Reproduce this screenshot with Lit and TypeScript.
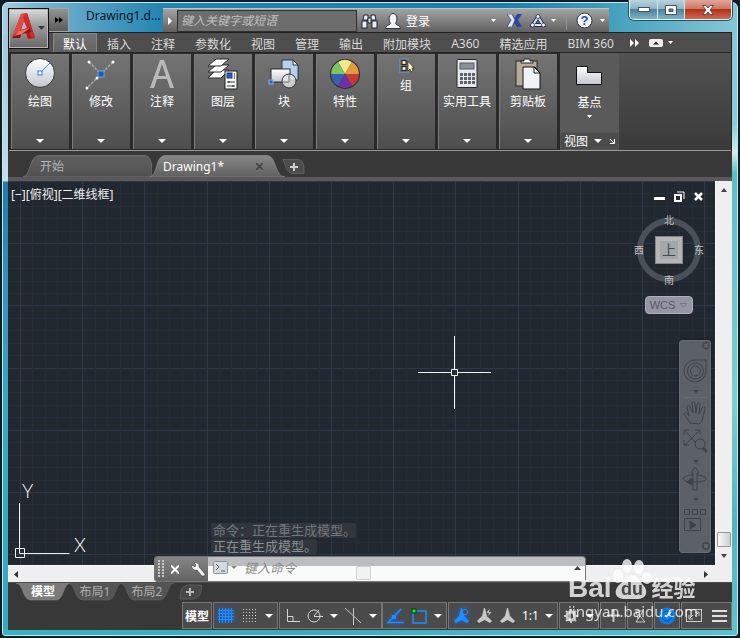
import { LitElement, html, svg, css, type TemplateResult } from "lit";
import { customElement, state } from "lit/decorators.js";
import { classMap } from "lit/directives/class-map.js";

const caret = html`<svg class="caret" width="8" height="4" viewBox="0 0 8 4" aria-hidden="true"><path d="M0 0h8L4 4z" fill="#fff" /></svg>`;
const smallCaret = html`<svg class="caret" width="5" height="3" viewBox="0 0 5 3" aria-hidden="true"><path d="M0 0h5L2.5 3z" fill="#fff" /></svg>`;

const icon = (w: number, h: number, body: TemplateResult) =>
  html`<svg width=${w} height=${h} viewBox="0 0 ${w} ${h}" aria-hidden="true">${body}</svg>`;

const wheel = ["#f2e98c", "#e39b3e", "#c23b36", "#6b32a3", "#3a5fb0", "#7cc562"];
const wheelSlice = (i: number) => {
  const a = ((i * 60 - 120) * Math.PI) / 180;
  const b = a + Math.PI / 3;
  const p = (t: number) => `${(16 + 14 * Math.cos(t)).toFixed(2)} ${(16 + 14 * Math.sin(t)).toFixed(2)}`;
  return svg`<path d="M16 16L${p(a)}A14 14 0 0 1 ${p(b)}z" fill=${wheel[i]} />`;
};

const shade = svg`<linearGradient id="shade" x1="0" y1="0" x2="0" y2="1"><stop offset="0" stop-color="#fff"/><stop offset="1" stop-color="#c3c6cf"/></linearGradient>`;

const ribbonIcons = {
  draw: icon(32, 32, svg`<defs>${shade}</defs><circle cx="16" cy="15" r="14.5" fill="url(#shade)" stroke="#33363b"/>
    <path d="M16 15L26 5" stroke="#3a83e8"/><rect x="14" y="13" width="4" height="4" fill="#fff" stroke="#2a78e4"/>`),
  modify: icon(32, 32, svg`<path d="M4 4L16 16M28 4L2 30" stroke="#a9a9a9" stroke-width="1.5" stroke-dasharray="3 1"/>
    <g fill="#fff"><circle cx="4" cy="4" r="1.5"/><circle cx="28" cy="4" r="1.5"/><circle cx="2" cy="30" r="1.5"/><circle cx="12" cy="20" r="1.5"/></g>
    <rect x="13" y="13" width="6" height="6" fill="#2458a8" stroke="#6fa4f0"/>`),
  note: icon(32, 32, svg`<path d="M14 2h4l10 28h-4l-3-9H11L8 30H4zM16 6l-4 12h8z" fill="#b9b9b9"/>`),
  layer: icon(32, 32, svg`<g fill="#fff" stroke="#2c2c2c"><path d="M1 20l8-8h13l-8 8z"/><path d="M1 14l8-7h13l-8 7z"/><path d="M1 8l8-7h13l-8 7z"/></g>
    <rect x="18" y="13" width="12" height="18" fill="#f2f3f5" stroke="#222"/><rect x="20" y="15" width="5" height="5" fill="#2e5db4" stroke="#193e84"/>
    <path d="M27.5 15v6" stroke="#888"/><path d="M20 24h8M20 28h8" stroke="#444"/><path d="M22 23v2M26 27v2" stroke="#222"/>`),
  block: icon(32, 32, svg`<defs>${shade}</defs><path d="M14 2h11l5 5v15H14z" fill="#b8d0ee" stroke="#24354f"/><path d="M25 2v5h5z" fill="#fff" stroke="#24354f"/>
    <rect x="3" y="11" width="19" height="13" fill="url(#shade)" stroke="#2a2a2a"/><circle cx="21" cy="23" r="7" fill="#e6e7eacc" stroke="#333"/>
    <path d="M21 16v8h-7" fill="none" stroke="#777"/><rect x="1" y="22" width="4" height="4" fill="#2d65b8" stroke="#7fb1f5"/>`),
  props: icon(32, 32, svg`<circle cx="16" cy="16" r="15" fill="#2b2b2b"/>${wheel.map((_, i) => wheelSlice(i))}`),
  group: icon(16, 16, svg`<rect x="1.5" y=".5" width="9" height="14" fill="none" stroke="#5a9dff" stroke-dasharray="1 1"/>
    <rect x="4" y="2.5" width="4" height="4" fill="#f0e7a0" stroke="#222"/><rect x="4" y="8.5" width="4" height="4" fill="#ddd" stroke="#222"/>
    <path d="M10 3v10l2-2 1 3 2-1-1-3h2z" fill="#fff4b8" stroke="#222" stroke-width=".7"/>`),
  calc: icon(32, 32, svg`<rect x="6" y="1.5" width="20" height="28" rx="1" fill="#e8e9ec" stroke="#26272b"/><rect x="9" y="5" width="14" height="6" fill="#8b9099" stroke="#555a63"/>
    ${[0, 1, 2, 3].map((c) => [0, 1, 2].map((r) => svg`<rect x=${9 + c * 4} y=${15 + r * 4} width="3" height="3" fill="#5d6068"/>`))}`),
  clip: icon(32, 32, svg`<rect x="4" y="3" width="21" height="25" fill="#b8ab9c" stroke="#2c2925"/><path d="M9 5V3h3V1h6v2h3v2z" fill="#fff" stroke="#222"/>
    <path d="M11 9h12l5 6v16H11z" fill="#f1f2f5" stroke="#151515"/><path d="M22 9v6h6z" fill="#fff" stroke="#151515"/>`),
  base: icon(32, 24, svg`<defs>${shade}</defs><path d="M2.5 3.5h11v6h14v12h-25z" fill="url(#shade)" stroke="#111"/>`),
};

interface Panel { label: string; art: TemplateResult; }
const panels: Panel[] = [
  { label: "绘图", art: ribbonIcons.draw },
  { label: "修改", art: ribbonIcons.modify },
  { label: "注释", art: ribbonIcons.note },
  { label: "图层", art: ribbonIcons.layer },
  { label: "块", art: ribbonIcons.block },
  { label: "特性", art: ribbonIcons.props },
  { label: "组", art: ribbonIcons.group },
  { label: "实用工具", art: ribbonIcons.calc },
  { label: "剪贴板", art: ribbonIcons.clip },
];

const ribbonTabs = ["默认", "插入", "注释", "参数化", "视图", "管理", "输出", "附加模块", "A360", "精选应用", "BIM 360"];

const base = css`
  *, *::before, *::after { box-sizing: border-box; }
  svg { display: block; flex: none; }
  button {
    margin: 0; padding: 0; border: 0; background: none; color: inherit;
    font: inherit; display: flex; align-items: center; justify-content: center; white-space: nowrap;
  }
  input { min-width: 0; margin: 0; padding: 0; border: 0; background: none; font: inherit; outline: none; }
`;

@customElement("title-bar")
export class TitleBar extends LitElement {
  static styles = [base, css`
    :host { display: flex; height: 32px; position: relative; }
    .app {
      position: absolute; left: 0; top: 8px; width: 41px; height: 41px; z-index: 2;
      padding-bottom: 6px; border: 1px solid #111; gap: 2px;
      background: linear-gradient(#dcdcdc, #a0a0a0 40%, #686868);
      box-shadow: inset 0 0 0 1px #b5b5b5;
    }
    .app svg + svg { align-self: flex-end; margin-bottom: 12px; }
    .quick { margin: 8px 0 0 41px; width: 20px; background: linear-gradient(#929292, #5b5b5b); border: 1px solid #a5a5a5; border-left: 0; }
    .name { width: 94px; padding: 7px 0 0 17px; font-size: 12px; line-height: 18px; color: #0b1420; white-space: nowrap; }
    .info {
      flex: 1; margin-top: 8px; min-width: 0; display: flex; align-items: center;
      background: linear-gradient(#a3a3a3, #606060); border-top: 1px solid #b6c4cc; color: #fff;
    }
    .next { width: 14px; height: 24px; }
    .search {
      width: 180px; height: 22px; padding: 0 3px; border: 1px solid #2f2f2f;
      background: #6d6d6d; font-size: 12px; font-style: italic; color: #fff;
    }
    .search::placeholder { color: #c2c2c2; opacity: 1; }
    .bino { margin-left: 4px; }
    .sign { margin-left: 7px; gap: 5px; font-size: 12px; }
    .grow { flex: 1; }
    .x { margin-left: 11px; }
    .tri { margin-left: 8px; gap: 5px; }
    .bar { width: 1px; height: 18px; margin: 0 9px 0 10px; background: #929292; }
    .help { gap: 7px; padding-right: 4px; }
    .win { display: flex; height: 20px; margin: 0 0 0 20px; border: 1px solid #dceff5; border-top: 0; border-radius: 0 0 5px 5px; overflow: hidden; box-shadow: 0 0 0 1px #31505f; }
    .win button { width: 27px; background: linear-gradient(#b9d3de, #8fb4c4 45%, #4b8299 50%, #7db5c6); }
    .win button + button { border-left: 1px solid #d2e6ee; }
    .win .close { width: 47px; background: linear-gradient(#e0a798, #cf7765 45%, #b23118 50%, #ce6a50); }
  `];

  render() {
    return html`
      <button class="app" aria-label="应用程序菜单">
        ${icon(24, 28, svg`<path d="M0 26L9 2l6-1 8 25-7 1-2-6-5 1-1 4z" fill="#b3171d"/><path d="M9 2l6-1-2 6-8 19-5 0z" fill="#e04a45"/>
          <path d="M12 9l3 7-6 2z" fill="#b9b9b9"/><path d="M15 1l8 25-4-1-8-20z" fill="#cf2a2c"/><path d="M4 21l14-5 1 4-10 2-1 4-8 0z" fill="#8d1014"/><path d="M2 24l5-5 11-3-8 6z" fill="#ef6c62"/>`)}
        ${icon(7, 4, svg`<path d="M0 0h7L3.5 4z" fill="#2e3947"/>`)}
      </button>
      <button class="quick" aria-label="更多">${icon(8, 6, svg`<path d="M0 0l4 3-4 3zM4 0l4 3-4 3z" fill="#000"/>`)}</button>
      <div class="name">Drawing1.d...</div>
      <div class="info">
        <button class="next" aria-label="展开">${icon(4, 8, svg`<path d="M0 0l4 4-4 4z" fill="#fff"/>`)}</button>
        <input class="search" aria-label="搜索" placeholder="键入关键字或短语" />
        <button class="bino" aria-label="查找">${icon(17, 16, svg`<g fill="#e9edf2" stroke="#1f2937"><path d="M3 2h4v5H2zM10 2h4l1 5h-5z"/><rect x="1" y="8" width="5" height="7"/><rect x="11" y="8" width="5" height="7"/><path d="M7 5h3v5H7z"/></g>`)}</button>
        <button class="sign">${icon(16, 16, svg`<path d="M.5 15.5c1-4 4-3 5-5C3 7 4 .5 8 .5S13 7 10.5 10.5c1 2 4 1 5 5z" fill="#f1f3f6" stroke="#2a3340"/>`)}<span>登录</span></button>
        <span class="grow"></span>
        ${smallCaret}
        <button class="x" aria-label="Exchange">${icon(15, 13, svg`<path d="M0 0h5l3 4 2-4h5l-4 6 4 7h-5l-3-4-2 4H0l4-7z" fill="#2748a0"/><path d="M0 0h5l3 6-3 7H0l4-7z" fill="#dfe6f4" stroke="#27345c" stroke-width=".6"/>`)}</button>
        <button class="tri" aria-label="A360">${icon(16, 14, svg`<path d="M8 3L3 11h10z" fill="none" stroke="#26324e" stroke-width="4"/><path d="M8 3L3 11h10z" fill="none" stroke="#dce3f2" stroke-width="2"/><g fill="#eef2fa" stroke="#26324e" stroke-width=".8"><circle cx="8" cy="2.5" r="2"/><circle cx="2.5" cy="11" r="2"/><circle cx="13.5" cy="11" r="2"/></g>`)}${smallCaret}</button>
        <span class="bar"></span>
        <button class="help" aria-label="帮助">
          <svg width="17" height="17" viewBox="0 0 17 17"><circle cx="8.5" cy="8.5" r="7.5" fill="#f4f6f9" stroke="#2b3442"/><text x="8.5" y="13" text-anchor="middle" font-family="Liberation Sans, sans-serif" font-weight="700" font-size="13" fill="#1c4fa5">?</text></svg>
          ${smallCaret}
        </button>
      </div>
      <div class="win">
        <button aria-label="最小化">${icon(12, 6, svg`<rect x=".5" y=".5" width="11" height="4" fill="#fff" stroke="#43515c"/>`)}</button>
        <button aria-label="最大化">${icon(12, 10, svg`<path d="M.5.5h11v9H.5zM4 4v2.5h4V4z" fill="#fff" fill-rule="evenodd" stroke="#43515c"/>`)}</button>
        <button class="close" aria-label="关闭">${icon(12, 10, svg`<path d="M.5.5h3.5L6 3 8 .5h3.5L8 5l3.5 4.5H8L6 7 4 9.5H.5L4 5z" fill="#fff" stroke="#5a4a4a"/>`)}</button>
      </div>`;
  }
}

@customElement("ribbon-bar")
export class RibbonBar extends LitElement {
  @state() private active = 0;
  static styles = [base, css`
    :host { display: block; background: #4b4b4b; border: 1px solid #222; border-bottom: 0; color: #d8d8d8; font-size: 12px; }
    .tabs { display: flex; height: 19px; padding-left: 44px; align-items: stretch; background: #4e4e4e; }
    .tab { padding: 1px 9px 0; border: 1px solid transparent; border-bottom: 0; }
    .on { color: #fff; background: linear-gradient(#747474, #626262); border-color: #858585; }
    .more { margin: 0 0 0 6px; }
    .mini { margin: 0 0 0 10px; gap: 5px; }
    .panels {
      display: flex; height: 99px; border-top: 1px solid #262626; border-bottom: 1px solid #999;
      background: linear-gradient(#525252, #3a3a3a);
    }
    .panel {
      width: 61px; height: 97px; display: flex; flex-direction: column; justify-content: space-between;
      background: linear-gradient(#747474, #4e4e4e); border: 1px solid #2a2a2a; border-width: 1px 1px 1px 2px; box-shadow: inset 1px 1px #7c7c7c; color: #fff;
    }
    .tool { flex-direction: column; padding-top: 4px; gap: 3px; line-height: 18px; }
    .drop { height: 16px; }
    .view { background: #5a5a5a; border-width: 0 0 0 2px; box-shadow: none; }
    .view .tool { padding-top: 10px; gap: 7px; }
    .view .tool .caret { margin-top: -4px; }
    .foot { display: flex; align-items: center; height: 18px; gap: 6px; padding: 0 3px; background: #4b4b4b; border: 1px solid #555; white-space: nowrap; }
    .foot .go { margin-left: auto; }
  `];

  render() {
    return html`
      <nav class="tabs">
        ${ribbonTabs.map((t, i) => html`<button class=${classMap({ tab: true, on: i === this.active })} @click=${() => (this.active = i)}>${t}</button>`)}
        <button class="more" aria-label="更多选项卡">${icon(9, 8, svg`<path d="M0 0l4 4-4 4zM5 0l4 4-4 4z" fill="#fff"/>`)}</button>
        <button class="mini" aria-label="最小化功能区">${icon(14, 8, svg`<rect width="14" height="8" rx="2" fill="#f0f0f0"/><path d="M4 5.5l3-3 3 3z" fill="#222"/>`)}${smallCaret}</button>
      </nav>
      <div class="panels">
        ${panels.map((p) => html`
          <section class="panel">
            <button class="tool">${p.art}<span>${p.label}</span></button>
            <button class="drop" aria-label=${p.label + "面板"}>${caret}</button>
          </section>`)}
        <section class="panel view">
          <button class="tool">${ribbonIcons.base}<span>基点</span>${smallCaret}</button>
          <div class="foot"><span>视图</span>${caret}<button class="go" aria-label="面板设置">${icon(5, 5, svg`<path d="M0 0l4 4M4.5 0v4.5H0" stroke="#fff" fill="none"/>`)}</button></div>
        </section>
      </div>`;
  }
}

@customElement("file-tabs")
export class FileTabs extends LitElement {
  static styles = [base, css`
    :host { display: flex; height: 30px; padding: 4px 0 0 15px; background: #383838; border-bottom: 4px solid #5a5a5a; font-size: 12px; }
    .tab { display: grid; align-items: center; height: 22px; }
    .tab > * { grid-area: 1 / 1; }
    .start { width: 129px; color: #b4b4b4; }
    .draw { width: 137px; margin-left: -2px; color: #fff; z-index: 1; }
    .draw .label { padding-left: 13px; }
    .label { justify-content: flex-start; padding-left: 17px; height: 22px; }
    .close { justify-self: end; margin-right: 24px; }
    .add { margin-left: -5px; height: 22px; }
  `];
  render() {
    return html`
      <div class="tab start">
        ${icon(129, 22, svg`<defs><linearGradient id="t1" x2="0" y2="1"><stop stop-color="#5f5f5f"/><stop offset="1" stop-color="#515151"/></linearGradient></defs><path d="M0 22C8 21 6 1 16 .5H121c7 0 8 7 8 21.5z" fill="url(#t1)" stroke="#6d6d6d"/>`)}
        <button class="label">开始</button>
      </div>
      <div class="tab draw">
        ${icon(137, 22, svg`<defs><linearGradient id="t2" x2="0" y2="1"><stop stop-color="#898989"/><stop offset="1" stop-color="#606060"/></linearGradient></defs><path d="M0 22C8 20 5 1 15 .5H117c10 0 7 21 18 21.5z" fill="url(#t2)" stroke="#8a8a8a" stroke-width=".7"/>`)}
        <button class="label">Drawing1*</button>
        <button class="close" aria-label="关闭图形">${icon(7, 7, svg`<path d="M0 0l7 7M7 0L0 7" stroke="#454545" stroke-width="1.8"/>`)}</button>
      </div>
      <button class="add" aria-label="新图形">${icon(23, 22, svg`<path d="M1 4.5h14c7 0 7 6 7 14H11C4 18 4 11 1 4.5z" fill="#4c4c4c" stroke="#606060"/><path d="M12 8v8M8 12h8" stroke="#ccc" stroke-width="2"/>`)}</button>`;
  }
}

@customElement("view-cube")
export class ViewCube extends LitElement {
  static styles = [base, css`
    :host { display: flex; flex-direction: column; align-items: center; gap: 9px; color: #c2c3c5; }
    .rose { display: grid; grid-template: 14px 46px 14px / 14px 46px 14px; place-items: center; font-size: 10px; line-height: 14px; position: relative; }
    .ring { position: absolute; inset: 5px; border: 6px solid #4b5058; border-radius: 50%; }
    .rose button { position: relative; line-height: 14px; }
    .n, .s { grid-column: 2; }
    .s { grid-row: 3; }
    .w { grid-area: 2 / 1; }
    .e { grid-area: 2 / 3; }
    .top { grid-area: 2 / 2; width: 28px; height: 28px; font-size: 14px; color: #3f474f; background: #a2a7aa; border: 1px solid #83878b; box-shadow: inset 0 0 0 4px #b5b5b5; }
    .wcs { width: 48px; height: 18px; gap: 4px; font: 11px "Liberation Sans", sans-serif; color: #565866; background: #9496a4; border: 1px solid #adafbb; border-radius: 4px; }
  `];
  render() {
    return html`
      <div class="rose"><span class="ring"></span>
        <button class="n">北</button><button class="w">西</button><button class="top">上</button><button class="e">东</button><button class="s">南</button>
      </div>
      <button class="wcs">WCS ${icon(9, 5, svg`<path d="M1 .5h7L4.5 4z" fill="none" stroke="#777987"/>`)}</button>`;
  }
}

@customElement("nav-bar")
export class NavBar extends LitElement {
  static styles = [base, css`
    :host { display: flex; flex-direction: column; align-items: center; width: 32px; height: 213px; background: #5c6167; border: 1px solid #6a6e73; border-radius: 3px; box-shadow: 0 0 2px #111; }
  `];
  render() {
    return html`${icon(30, 211, svg`
      <g fill="none" stroke="#3c4249">
        <circle cx="26" cy="4.5" r="3.5" fill="#4a4f55"/><path d="M24 2.5l4 4M28 2.5l-4 4" stroke="#747980"/>
        <path d="M16 19h10v11a11 11 0 1 1-10-11z"/><circle cx="15.5" cy="30" r="8"/><circle cx="15.5" cy="30" r="5"/>
        <path d="M10 82c-2-4-5-7-6-9 0-2 3-2 5 2l-2-9c0-3 3-2 3 0l3 6-1-9c0-3 3-3 3 0l1 9 1-8c0-3 3-2 3 0l-1 9 3-6c1-2 4-1 3 1l-3 12-3 3z"/>
        <path d="M5 90l13 14M19 90L5 104M4 94v-5h5M15 89h5v4M4 99v5h5"/><circle cx="20" cy="103" r="5" fill="#5c6167"/><path d="M23 107l4 4" stroke-width="2.5"/>
        <path d="M13 149v-17h-2l4-6 4 6h-2v17z"/><path d="M13 134c-14 1-11 6-3 7M17 134c13 1 11 7 0 7h-6"/><path d="M12 137l-5 4 5 3z" fill="#3c4249"/>
        <path d="M4.5 168.5h5v5h-5zM12.5 168.5h5v5h-5zM20.5 168.5h5v5h-5zM4.5 177.5h16v12h-16z"/><path d="M10 180l6 4-6 4z" fill="#3c4249"/>
        <circle cx="26" cy="205" r="3.5" fill="#4a4f55"/><path d="M24 204h4M24 206h4" stroke="#747980"/>
      </g>
      <g fill="#3c4249"><path d="M13 49h6l-3 3zM13 119h6l-3 3zM13 157h6l-3 3z"/></g>
      <path d="M3 56.5h24" stroke="#666b70"/>`)}`;
  }
}

// The drawing grid: a minor line every GRID units, every fifth one is major.
const GRID = 12.44;
const gridLines = (count: number, offset: number, vertical: boolean) =>
  [false, true].map((major) =>
    Array.from({ length: count }, (_, i) => i)
      .filter((i) => (i % 5 === 0) === major)
      .map((i) => {
        const p = Math.round(offset + i * GRID) + 0.5;
        const color = major ? "#2f384b" : "#252d36";
        return vertical ? svg`<path d="M${p} 0V2000" stroke=${color}/>` : svg`<path d="M0 ${p}H3000" stroke=${color}/>`;
      }));

@customElement("model-view")
export class ModelView extends LitElement {
  static styles = [base, css`
    :host { display: grid; grid-template: minmax(0, 1fr) 17px / minmax(0, 1fr) 17px; position: relative; min-height: 384px; }
    .canvas { position: relative; overflow: hidden; background: #212830; }
    .grid { position: absolute; left: 0; top: 0; }
    .views { position: absolute; left: 3px; top: 5px; font-size: 12px; line-height: 18px; color: #eee; display: flex; }
    .wincon { position: absolute; right: 12px; top: 10px; display: flex; align-items: center; gap: 9px; }
    .cross { position: absolute; left: 410px; top: 155px; }
    .ucs { position: absolute; left: 6px; bottom: 6px; }
    view-cube { position: absolute; right: 9px; top: 32px; }
    nav-bar { position: absolute; right: 4px; top: 159px; }
    .v, .h { display: flex; align-items: center; justify-content: space-between; background: #efefef; }
    .v { flex-direction: column; padding: 7px 0 7px; border-left: 1px solid #fafafa; }
    .h { padding: 0 7px 0 6px; border-top: 1px solid #fafafa; }
    .thumb { width: 14px; height: 15px; margin: auto 0 7px; border: 1px solid #999; border-radius: 1px; background: linear-gradient(90deg, #fafafa, #cfcfcf); }
    .corner { background: #efefef; }
    .cmd { position: absolute; left: 146px; bottom: 0; width: 432px; max-width: calc(100% - 146px); height: 26px; display: flex; border: 1px solid #777; border-radius: 3px; overflow: hidden; }
    .tools { width: 53px; display: flex; align-items: center; gap: 7px; padding-left: 3px; background: linear-gradient(#858585, #626262); }
    .entry { flex: 1; min-width: 0; display: flex; align-items: center; gap: 4px; padding: 0 4px 2px 5px; background: linear-gradient(#bcbdc0 9px, #fafafa 9px); }
    .line { flex: 1; padding-left: 3px; font-size: 13px; line-height: 16px; font-style: italic; color: #777; }
    .line::placeholder { color: #8a8a8a; opacity: 1; }
    .up { align-self: flex-start; margin-top: 9px; }
    .knob { position: absolute; left: 348px; bottom: 2px; width: 15px; height: 14px; border: 1px solid #d0d0d0; border-radius: 2px; background: #f2f2f2; }
    .log { position: absolute; left: 203px; bottom: 28px; display: flex; flex-direction: column; align-items: flex-start; gap: 1px; font-size: 13px; line-height: 15px; color: #73777b; }
    .log span { padding-left: 2px; background: #30363c; border-radius: 2px; }
    .log span + span { color: #8b8e91; }
  `];
  render() {
    return html`
      <div class="canvas">
        <svg class="grid" width="3000" height="2000" aria-hidden="true">
          ${gridLines(160, 0, false)}
          ${gridLines(240, 12, true)}
        </svg>
        <div class="views"><button>[−]</button><button>[俯视]</button><button>[二维线框]</button></div>
        <div class="wincon">
          <button aria-label="最小化">${icon(11, 11, svg`<path d="M0 6h11v3H0z" fill="#fff"/>`)}</button>
          <button aria-label="还原">${icon(11, 11, svg`<path d="M3 1h7v7" fill="none" stroke="#fff"/><rect x="1" y="4" width="6" height="6" fill="none" stroke="#fff" stroke-width="2"/>`)}</button>
          <button aria-label="关闭">${icon(9, 9, svg`<path d="M1 1l7 7M8 1L1 8" stroke="#fff" stroke-width="2.5"/>`)}</button>
        </div>
        <svg class="cross" width="73" height="73" viewBox="0 0 73 73" aria-hidden="true"><path d="M0 36.5h33M40 36.5h33M36.5 0v33M36.5 40v33M33.5 33.5h6v6h-6z" fill="none" stroke="#f2f2f2"/></svg>
        <svg class="ucs" width="80" height="88" viewBox="0 0 80 88" aria-hidden="true">
          <path d="M5.5 32v50.5h50M1.5 77.5h9v9h-9z" fill="none" stroke="#eee"/>
          <g font-family="Lato, sans-serif" font-weight="300" font-size="19" fill="#fff"><text x="8" y="27">Y</text><text x="60" y="81">X</text></g>
        </svg>
        <view-cube></view-cube>
        <nav-bar></nav-bar>
      </div>
      <div class="v">${icon(6, 4, svg`<path d="M0 4l3-4 3 4z" fill="#444"/>`)}<span class="thumb"></span>${icon(6, 4, svg`<path d="M0 0l3 4 3-4z" fill="#444"/>`)}</div>
      <div class="h">${icon(4, 7, svg`<path d="M4 0L0 3.5 4 7z" fill="#333"/>`)}${icon(4, 7, svg`<path d="M0 0l4 3.5L0 7z" fill="#333"/>`)}</div>
      <div class="corner"></div>
      <div class="log"><span>命令：正在重生成模型。</span><span>正在重生成模型。</span></div>
      <div class="cmd">
        <div class="tools">
          ${icon(6, 18, svg`<g fill="#c8c8c8">${[0, 3, 6, 9, 12, 15].map((y) => [0, 4].map((x) => svg`<rect x=${x} y=${y} width="2" height="2"/>`))}</g>`)}
          <button aria-label="关闭">${icon(8, 9, svg`<path d="M0 .5l8 8M8 .5l-8 8" stroke="#fff" stroke-width="2"/>`)}</button>
          <button aria-label="自定义">${icon(20, 15, svg`<path d="M6 3l3 2 1-2-2-2c3-1 6 1 5 4l6 7c0 2-1 2-3 2L11 8C8 9 5 6 6 3z" fill="#f4f4f4" stroke="#333" stroke-width=".5"/>`)}</button>
        </div>
        <div class="entry">
          <button aria-label="最近使用的命令">${icon(24, 14, svg`<rect x=".5" y=".5" width="14" height="12" rx="1" fill="#d5d8dc" stroke="#8d949d"/><path d="M3 3l3 3-3 3M8 10h4" fill="none" stroke="#59616b"/><path d="M18 5h6l-3 3z" fill="#888"/>`)}</button>
          <input class="line" aria-label="命令" placeholder="键入命令" />
          <button class="up" aria-label="命令历史">${icon(7, 4, svg`<path d="M0 4l3.5-4L7 4z" fill="#444"/>`)}</button>
        </div>
      </div>
      <span class="knob"></span>`;
  }
}

@customElement("layout-tabs")
export class LayoutTabs extends LitElement {
  @state() private active = 0;
  static styles = [base, css`
    :host { display: flex; height: 20px; padding-left: 8px; background: #383838; border-top: 1px solid #4c4c4c; font-size: 12px; color: #b0b0b0; }
    .tab { display: grid; width: 54px; height: 18px; margin-right: -2px; }
    .tab > * { grid-area: 1 / 1; place-self: center; }
    .tab path { fill: #545454; stroke: #666; }
    .on path { fill: #7b7b7b; stroke: #8a8a8a; }
    .on { color: #fff; font-weight: 700; }
    .tab svg { z-index: 0; }
    .tab span { z-index: 1; line-height: 16px; }
  `];
  render() {
    const names = ["模型", "布局1", "布局2"];
    return html`
      ${names.map((n, i) => html`
        <button class=${classMap({ tab: true, on: i === this.active })} @click=${() => (this.active = i)}>
          ${icon(54, 18, svg`<path d="M0 0h54c-7 1-6 17-14 17H15C6 17 8 1 0 0z" stroke-width=".6"/>`)}<span>${n}</span>
        </button>`)}
      <button aria-label="新建布局">${icon(30, 18, svg`<path d="M29.5 1c0 7-1 14-9 14H8C8 5 11 1 17 1z" fill="#484848" stroke="#5b5b5b"/><path d="M18 4v8M14 8h8" stroke="#bbb" stroke-width="2"/>`)}</button>`;
  }
}

const person = (color: string, extra: TemplateResult) =>
  icon(17, 17, svg`<path d="M8 1h1l2 8 5 5-2 2-5.5-3L3 16l-2-2 5-5z" fill=${color}/>${extra}`);

@customElement("status-bar")
export class StatusBar extends LitElement {
  static styles = [base, css`
    :host { display: flex; justify-content: flex-end; height: 28px; padding-bottom: 1px; background: #383838; font-size: 12px; color: #fff; }
    .group { display: flex; align-items: center; justify-content: space-between; height: 27px; margin-left: 1px; padding: 0 4px; background: #4b4b4b; border: 1px solid #777; }
    .model { width: 30px; padding: 0; justify-content: center; font-weight: 700; }
    .snap { width: 65px; }
    .polar { width: 103px; }
    .osnap { width: 65px; margin-left: 0; }
    .scale { width: 110px; }
    .gear { width: 40px; }
    .one { width: 26px; justify-content: center; }
    .last { width: 51px; }
    .blue { filter: drop-shadow(0 0 2px #0a6cff); }
  `];
  render() {
    const lines = [2, 5, 8, 11, 14];
    const dots = [0, 3, 6, 9, 12];
    return html`
      <button class="group model">模型</button>
      <div class="group snap">
        <button class="blue" aria-label="栅格">${icon(16, 15, svg`<g stroke="#1e90ff">${lines.map((x) => svg`<path d="M${x - 0.5} 0v15"/>`)}${lines.slice(0, 4).map((y) => svg`<path d="M0 ${y + 0.5}h16"/>`)}</g>`)}</button>
        <button aria-label="捕捉">${icon(14, 14, svg`<g fill="#ccc">${dots.map((x) => dots.map((y) => svg`<rect x=${x} y=${y} width="1" height="1"/>`))}</g>`)}</button>
        ${caret}
      </div>
      <div class="group polar">
        <button aria-label="正交">${icon(16, 14, svg`<path d="M3.5 0v12.5H16M3 7.5h6V13" fill="none" stroke="#d5d5d5"/>`)}</button>
        <button aria-label="极轴追踪">${icon(16, 14, svg`<circle cx="7" cy="7" r="6" fill="none" stroke="#d5d5d5"/><path d="M7 7.5h9M7 7l5-6" stroke="#d5d5d5"/>`)}</button>
        ${caret}
        <button aria-label="等轴测草图">${icon(18, 18, svg`<path d="M1 1l16 15M9.5 1v17" stroke="#c5c5c5"/>`)}</button>
        ${caret}
      </div>
      <div class="group osnap">
        <button class="blue" aria-label="对象捕捉追踪">${icon(17, 16, svg`<path d="M14 1L1 14.5h16" fill="none" stroke="#1e90ff" stroke-width="1.5"/><rect x="5" y="7" width="4" height="4" fill="#1e90ff"/>`)}</button>
        <button aria-label="对象捕捉">${icon(16, 16, svg`<rect x="2" y="3" width="13" height="12" fill="none" stroke="#1e90ff" stroke-width="1.5"/><rect x="1" y="1" width="4" height="4" fill="#0f2" stroke="#003a00"/>`)}</button>
        ${caret}
      </div>
      <div class="group scale">
        <button class="blue" aria-label="注释可见性">${person("#1e90ff", svg`<circle cx="12" cy="5" r="2.5" fill="#4b4b4b" stroke="#1e90ff"/>`)}</button>
        <button aria-label="自动缩放">${person("#c8c8c8", svg`<path d="M14 1l-4 5h3l-2 4 5-5h-3z" fill="#ddd" stroke="#4b4b4b" stroke-width=".5"/>`)}</button>
        <button aria-label="注释比例">${person("#c8c8c8", svg``)}</button>
        <button>1:1</button>
        ${caret}
      </div>
      <div class="group gear">
        <button aria-label="切换工作空间">${icon(14, 14, svg`<circle cx="7" cy="7" r="4" fill="none" stroke="#c8c8c8" stroke-width="3"/><path d="M7 0v3M7 11v3M0 7h3M11 7h3M2 2l2 2M10 10l2 2M12 2l-2 2M4 10l-2 2" stroke="#c8c8c8" stroke-width="2"/>`)}</button>${caret}
      </div>
      <button class="group one" aria-label="注释监视器">${icon(13, 13, svg`<path d="M6.5 0v13M0 6.5h13" stroke="#ccc" stroke-width="2"/>`)}</button>
      <button class="group one" aria-label="隔离对象">${icon(14, 14, svg`<path d="M3 2h7L5 10zM7 7l5 6H3z" fill="none" stroke="#ccc"/>`)}</button>
      <button class="group one" aria-label="硬件加速">${icon(18, 18, svg`<circle cx="9" cy="9" r="8.5" fill="#0b7df0"/><circle cx="9" cy="9" r="5" fill="none" stroke="#064a9b"/><path d="M8 10l5-5" stroke="#cde6ff" stroke-width="2"/>`)}</button>
      <div class="group last">
        <button aria-label="全屏显示">${icon(16, 13, svg`<rect x=".5" y=".5" width="15" height="12" fill="none" stroke="#ccc"/><path d="M4 9l3-3M9 7l3-3M3 6v4h4M9 3h4v4" fill="none" stroke="#ccc"/>`)}</button>
        <button aria-label="自定义">${icon(15, 12, svg`<path d="M0 1h15M0 6h15M0 11h15" stroke="#e0e0e0" stroke-width="2"/>`)}</button>
      </div>`;
  }
}

@customElement("site-mark")
export class SiteMark extends LitElement {
  static styles = [base, css`
    :host { display: block; width: 132px; color: #fff; opacity: .78; pointer-events: none; }
    .row { display: flex; align-items: flex-end; height: 43px; }
    .bai { font: 700 28px/26px "Liberation Sans", sans-serif; }
    .zh { font-size: 22px; line-height: 28px; font-weight: 700; }
    .url { font: 15px/20px "Noto Sans", sans-serif; }
  `];
  render() {
    return html`
      <div class="row">
        <span class="bai">Bai</span>
        <svg width="40" height="44" viewBox="0 0 40 44"><g fill="#fff"><ellipse cx="6" cy="19" rx="5" ry="7"/><ellipse cx="15" cy="9" rx="5" ry="7"/><ellipse cx="27" cy="10" rx="5" ry="7"/><ellipse cx="35" cy="21" rx="5" ry="6"/><path d="M20 18c6 0 8 7 12 11 4 5 3 12-5 13H11C2 41 2 33 7 28c5-4 7-10 13-10z"/></g>
          <text x="20" y="38" text-anchor="middle" font-family="Liberation Sans, sans-serif" font-size="18" font-weight="700" fill="#4a4a4a">du</text></svg>
        <span class="zh">经验</span>
      </div>
      <div class="url">jingyan.baidu.com</div>`;
  }
}

@customElement("app-root")
export class AppRoot extends LitElement {
  static styles = [base, css`
    :host {
      display: flex; flex-direction: column; min-height: 100vh; box-sizing: border-box; position: relative;
      padding: 0 8px 8px; background: #111c24;
      font-family: "Noto Sans", "Noto Sans CJK SC", sans-serif; font-size: 12px; overflow: hidden;
    }
    .glass {
      position: absolute; inset: 2px; border: 1px solid #bfeaf2; border-radius: 6px 6px 3px 3px;
      background:
        linear-gradient(90deg, #a9cbdf, #7db6d2 30px, #2284b2 160px, #1f7cad 500px, #3f9dba 600px, #86c6d8) top / 100% 32px no-repeat,
        linear-gradient(90deg, #38b2c5, #3aaac2 40%, #55c3ce) bottom / 100% 6px no-repeat,
        linear-gradient(#9ac1d6, #b8d8e5 140px, #c4e0ea 178px, #2179a9 179px, #358db5 260px, #3aa7c2 400px, #35a9c0) left / 6px 100% no-repeat,
        linear-gradient(#86c6d8, #8ccbd9 120px, #d0edf1 150px, #5ebdc5 170px, #7fcdd0 400px, #4fb3c4 520px, #65c2cd) right / 6px 100% no-repeat;
    }
    main { position: relative; flex: 1; display: flex; flex-direction: column; }
    title-bar { z-index: 1; }
    model-view { flex: 1; }
    site-mark { position: absolute; right: 32px; bottom: 9px; }
  `];
  render() {
    return html`
      <div class="glass"></div>
      <main>
        <title-bar></title-bar>
        <ribbon-bar></ribbon-bar>
        <file-tabs></file-tabs>
        <model-view></model-view>
        <layout-tabs></layout-tabs>
        <status-bar></status-bar>
        <site-mark></site-mark>
      </main>`;
  }
}
